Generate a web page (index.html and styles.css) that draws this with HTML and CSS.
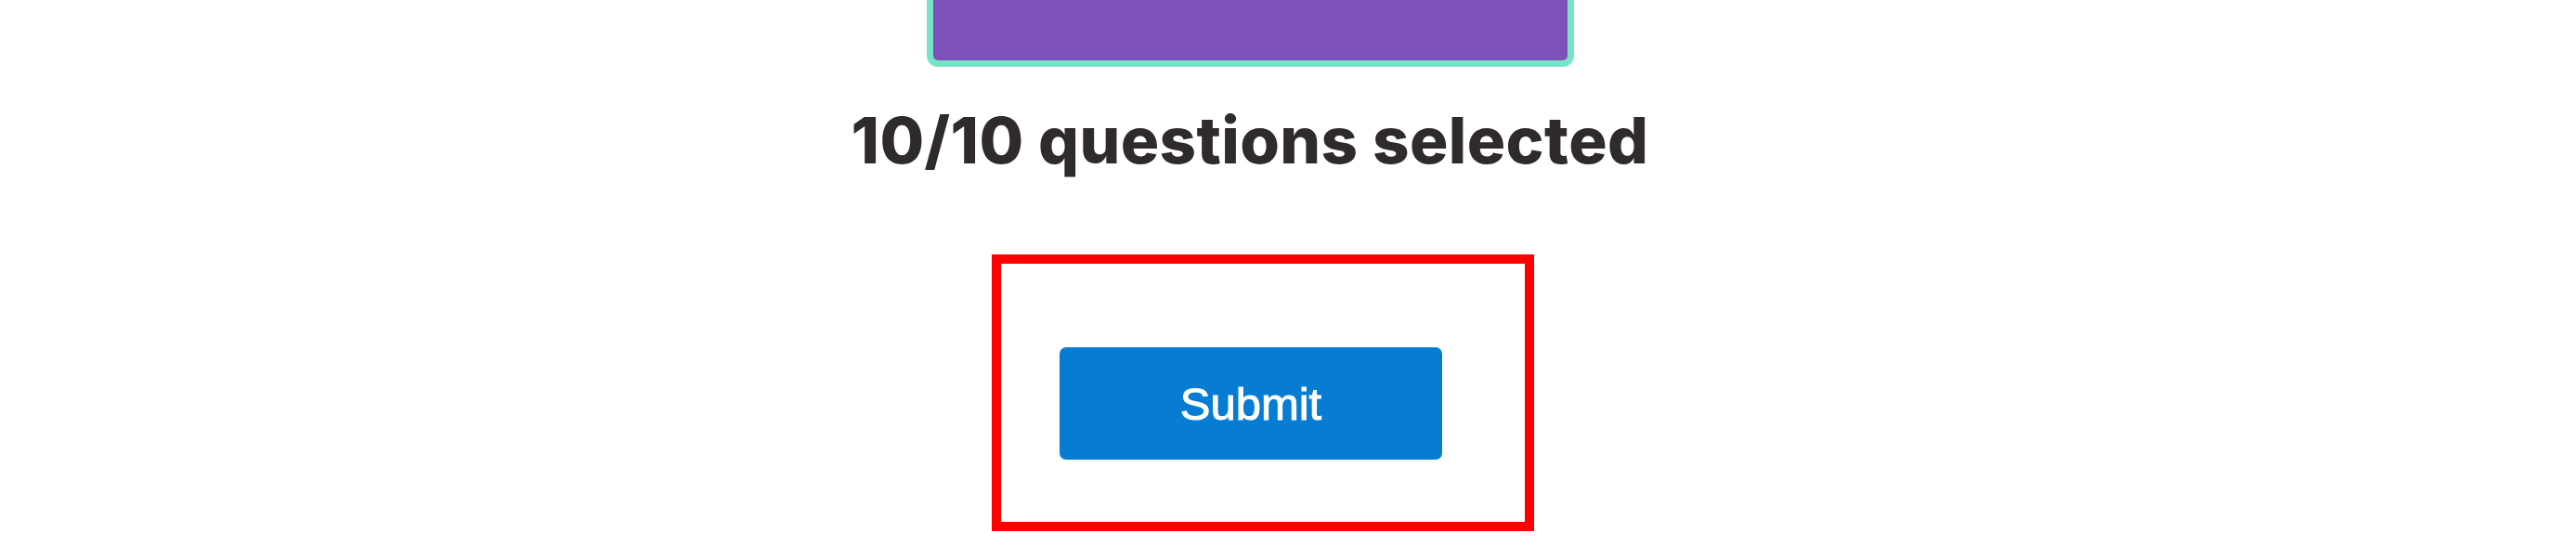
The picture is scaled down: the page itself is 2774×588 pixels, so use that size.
FILE: index.html
```html
<!DOCTYPE html>
<html lang="en">
<head>
<meta charset="utf-8">
<title>Quiz</title>
<link rel="stylesheet" href="styles.css">
</head>
<body>
<main class="page">
  <div class="topic-card"></div>
  <h2 class="count">10/10 questions selected</h2>
  <section class="submit-area">
    <button class="submit-btn" type="button">Submit</button>
  </section>
</main>
</body>
</html>
```
FILE: styles.css
```css
html, body {
  margin: 0;
  padding: 0;
  background: #ffffff;
}
body {
  width: 2774px;
  height: 588px;
  overflow: hidden;
}
.page {
  display: flex;
  flex-direction: column;
  align-items: center;
  padding-right: 82px;
}
.topic-card {
  box-sizing: border-box;
  width: 697px;
  height: 120px;
  margin-top: -48px;
  background: #7e50ba;
  border: 7px solid #76e4c6;
  border-radius: 12px;
}
.count {
  margin: 37px 0 0 0;
  font-family: "Inter", "Liberation Sans", sans-serif;
  font-weight: 800;
  font-size: 69px;
  line-height: 84px;
  color: #2f2b2b;
  letter-spacing: 0.4px;
}
.submit-area {
  box-sizing: border-box;
  width: 584px;
  height: 298px;
  margin-top: 81px;
  margin-left: 28px;
  border: 10px solid #ff0000;
  padding: 90px 89px 67px 63px;
  display: flex;
}
.submit-btn {
  width: 412px;
  height: 121px;
  border: none;
  border-radius: 7px;
  background: #067cd3;
  color: #ffffff;
  font-family: "Liberation Sans", Arial, sans-serif;
  font-size: 49px;
  -webkit-text-stroke: 1px #ffffff;
  padding: 0;
  cursor: pointer;
}
```
